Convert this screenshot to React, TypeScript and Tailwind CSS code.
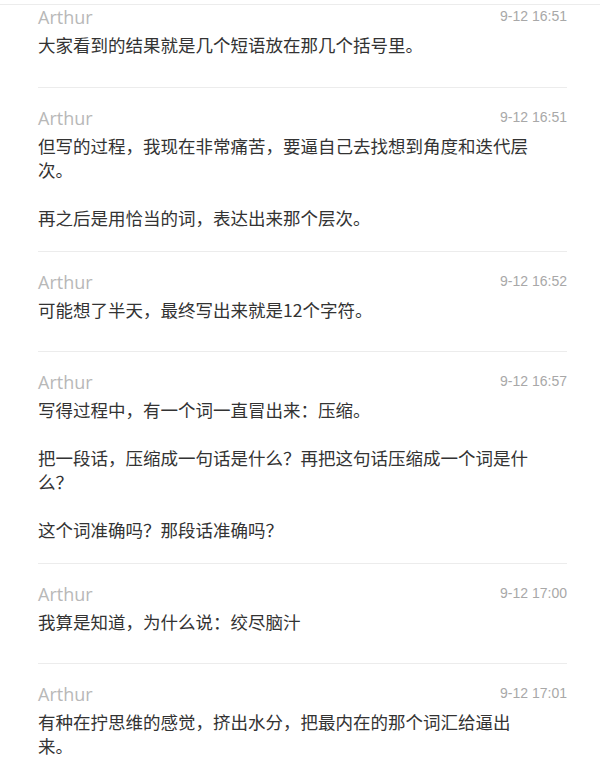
import React from "react";

type Msg = { time: string; paras: string[][] };

const msgs: Msg[] = [
  { time: "9-12 16:51", paras: [["大家看到的结果就是几个短语放在那几个括号里。"]] },
  {
    time: "9-12 16:51",
    paras: [
      ["但写的过程，我现在非常痛苦，要逼自己去找想到角度和迭代层", "次。"],
      ["再之后是用恰当的词，表达出来那个层次。"],
    ],
  },
  { time: "9-12 16:52", paras: [["可能想了半天，最终写出来就是12个字符。"]] },
  {
    time: "9-12 16:57",
    paras: [
      ["写得过程中，有一个词一直冒出来：压缩。"],
      ["把一段话，压缩成一句话是什么？再把这句话压缩成一个词是什", "么？"],
      ["这个词准确吗？那段话准确吗？"],
    ],
  },
  { time: "9-12 17:00", paras: [["我算是知道，为什么说：绞尽脑汁"]] },
  {
    time: "9-12 17:01",
    paras: [["有种在拧思维的感觉，挤出水分，把最内在的那个词汇给逼出", "来。"]],
  },
];

export default function App() {
  return (
    <div className="min-h-[779px] w-[600px] overflow-hidden bg-white">
      <div className="h-[5px] border-b border-[#ececec]" />
      <div className="ml-[38px] -mt-[19px] w-[529px]">
        {msgs.map((m, i) => (
          <div
            key={i}
            className={
              i === 0
                ? "pt-[19px] pb-[22px]"
                : "border-t border-[#ececec] pt-[18px] pb-[21px]"
            }
          >
            <div className="flex h-[24px] items-start justify-between">
              <span className="font-['Open_Sans',sans-serif] text-[18px] leading-[24px] text-[#b8b8b8]">
                Arthur
              </span>
              <span className="mt-[2px] font-['Liberation_Sans',Arial,sans-serif] text-[14px] leading-[18px] text-[#a8a8a8]">
                {m.time}
              </span>
            </div>
            <div className="mt-[4px] flex min-h-[32px] flex-col gap-[24px] whitespace-nowrap font-['Noto_Sans_CJK_SC','Noto_Sans',sans-serif] text-[17.5px] leading-[24px] text-[#333333]">
              {m.paras.map((p, j) => (
                <p key={j}>
                  {p.map((line, k) => (
                    <span key={k} className="block">
                      {line}
                    </span>
                  ))}
                </p>
              ))}
            </div>
          </div>
        ))}
      </div>
    </div>
  );
}
